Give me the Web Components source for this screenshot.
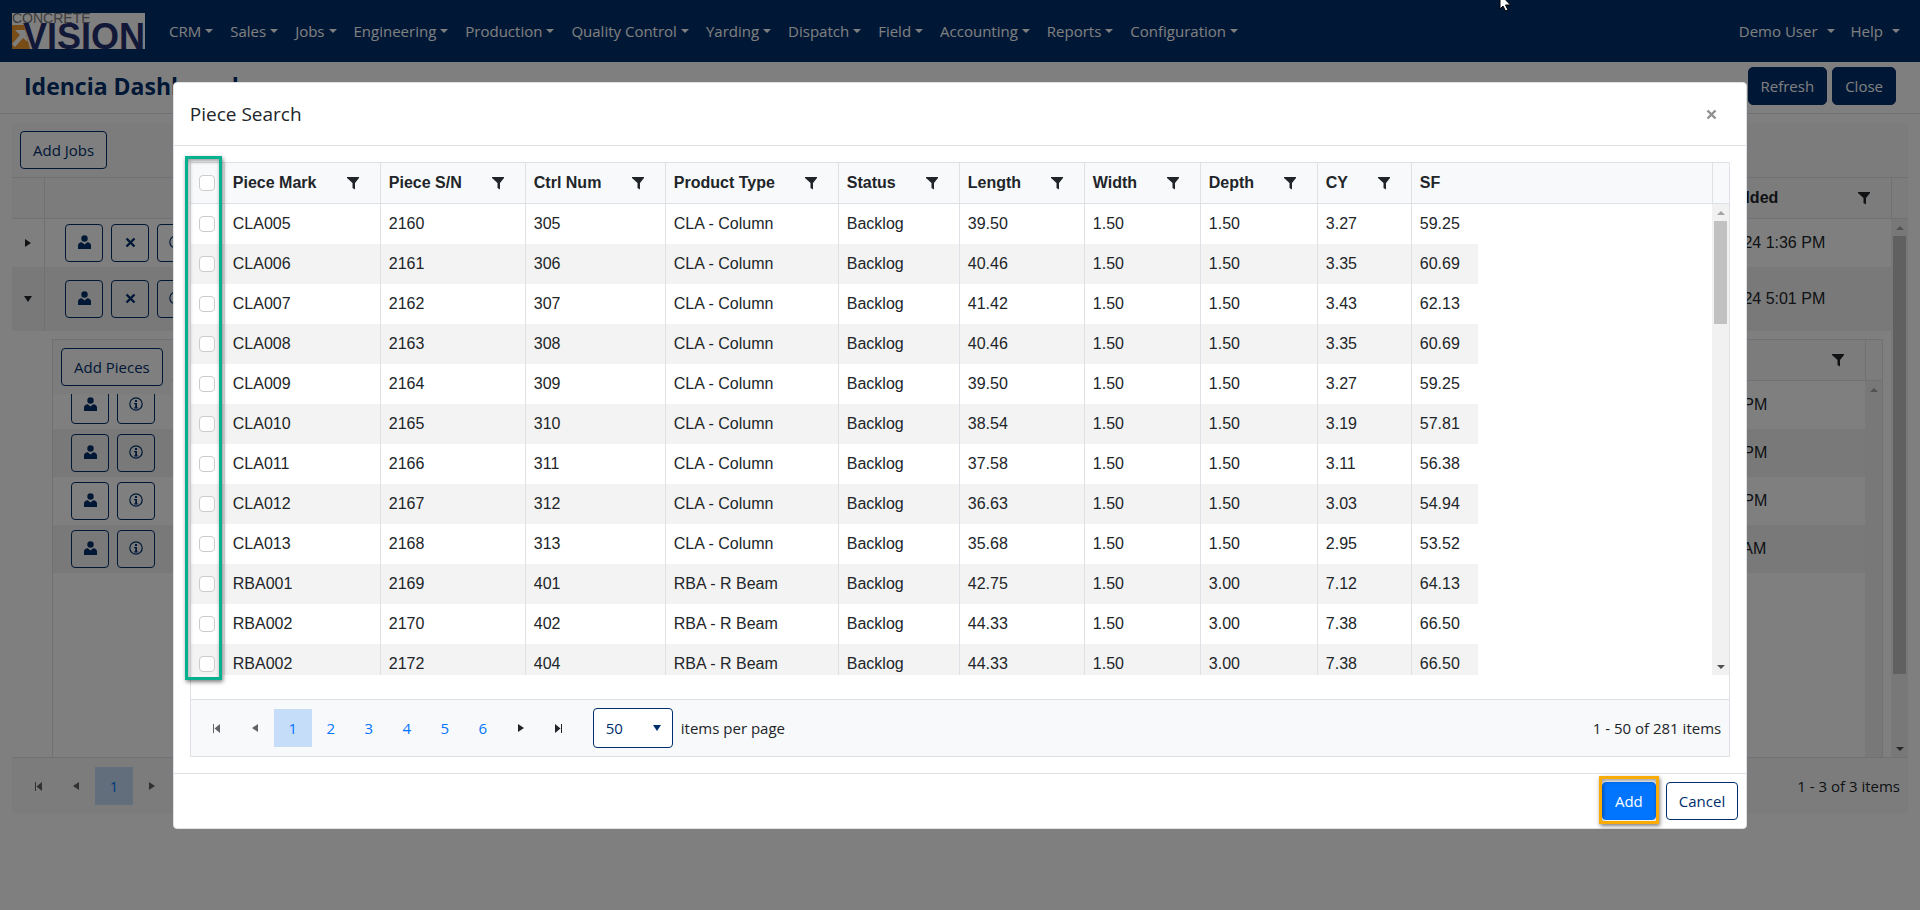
<!DOCTYPE html>
<html lang="en">
<head>
<meta charset="utf-8">
<title>Idencia Dashboard</title>
<style>
  :root {
    --navy: #002e6d;
    --line: #dee2e6;
    --panel: #f8f9fa;
    --text: #212529;
    --ui: "Open Sans", "Noto Sans", sans-serif;
    --data: "Liberation Sans", Arial, sans-serif;
  }
  body {
    margin: 0;
    min-height: 100vh;
    overflow: hidden;
    background: #fff;
    color: var(--text);
    font: 15px/24px var(--ui);
  }
</style>
</head>
<body>
<app-navbar>
  <nav-item>CRM</nav-item>
  <nav-item>Sales</nav-item>
  <nav-item>Jobs</nav-item>
  <nav-item>Engineering</nav-item>
  <nav-item>Production</nav-item>
  <nav-item>Quality Control</nav-item>
  <nav-item>Yarding</nav-item>
  <nav-item>Dispatch</nav-item>
  <nav-item>Field</nav-item>
  <nav-item>Accounting</nav-item>
  <nav-item>Reports</nav-item>
  <nav-item>Configuration</nav-item>
  <nav-item slot="user" wide>Demo User</nav-item>
  <nav-item slot="user" wide>Help</nav-item>
</app-navbar>
<page-bar heading="Idencia Dashboard">
  <ui-button variant="solid">Refresh</ui-button>
  <ui-button variant="solid">Close</ui-button>
</page-bar>
<jobs-grid></jobs-grid>
<modal-dialog heading="Piece Search">
  <piece-grid></piece-grid>
  <ui-button slot="footer" variant="primary" marked>Add</ui-button>
  <ui-button slot="footer">Cancel</ui-button>
</modal-dialog>
<mouse-pointer></mouse-pointer>

<script>
const ICONS = {
  filter: '<path d="M0 0h12v1L8 6v6.500L5.500 11V6L0 1z"/>',
  person: '<circle cx="6.500" cy="3.500" r="3.200"/><path d="M0 14v-3.500C0 8.500 1.500 7.500 3.800 7.200L6.500 9.500 9.200 7.200C11.500 7.500 13 8.500 13 10.500V14z"/>',
  close: '<path d="M1.500 1.500l8 8M9.500 1.500l-8 8" fill="none" stroke="currentColor" stroke-width="2.400"/>',
  info: '<circle cx="7" cy="7" r="6.200" fill="none" stroke="currentColor" stroke-width="1.200"/><path d="M6 3h2v2H6zM5 6h3v4.500h1.200v1H5v-1h1.200V7H5z"/>',
  right: '<path d="M0 0l6 4-6 4z"/>',
  left: '<path d="M6 0L0 4l6 4z"/>',
  down: '<path d="M0 0h8L4 6z"/>',
  first: '<path d="M0 0h1v9H0zM7 0v9L1.500 4.500z"/>',
  last: '<path d="M6 0h1v9H6zM0 0v9l5.500-4.500z"/>',
};
const SIZES = {
  filter: [12, 13], person: [13, 14], close: [11, 11], info: [14, 14],
  right: [6, 8], left: [6, 8], down: [8, 6], first: [7, 9], last: [7, 9],
};

function icon(name) {
  const [w, h] = SIZES[name];
  return `<svg width="${w}" height="${h}" viewBox="0 0 ${w} ${h}" fill="currentColor" aria-hidden="true">${ICONS[name]}</svg>`;
}

class BaseElement extends HTMLElement {
  constructor() {
    super();
    this.attachShadow({ mode: "open" });
  }

  connectedCallback() {
    this.shadowRoot.innerHTML = this.template();
  }
}

class NavItem extends BaseElement {
  template() {
    return `
      <style>
        :host { display: block; }
        a {
          display: flex;
          align-items: center;
          gap: 4px;
          padding: 8px;
          color: #fff;
          text-decoration: none;
          white-space: nowrap;
        }
        :host([wide]) a { gap: 9px; }
        i {
          border: 4px solid transparent;
          border-top-color: currentColor;
          border-bottom: 0;
        }
      </style>
      <a href="#"><slot></slot><i></i></a>
    `;
  }
}

class AppNavbar extends BaseElement {
  template() {
    return `
      <style>
        :host { display: block; background: var(--navy); }
        nav {
          display: flex;
          align-items: center;
          min-height: 62px;
          padding: 0 12px;
          box-sizing: border-box;
        }
        .logo { display: flex; margin-right: 16px; }
        .logo svg { overflow: visible; }
        .menu, .user { display: flex; }
        .menu { gap: 1px; }
        .user { margin-left: auto; }
      </style>
      <nav>
        <a class="logo" href="#" aria-label="Concrete Vision">
          <svg width="133" height="36" viewBox="0 0 133 36">
            <path d="M0 0h133v36H0z" fill="#fff"/>
            <path d="M0 12h12l6 24H0z" fill="#f0982c"/>
            <path d="M3 17h10l3 12-5-4-8 9-3-3 8-9z" fill="#fff"/>
            <text x="0" y="10" font-family="Liberation Sans, sans-serif" font-size="14" fill="#777">CONCRETE</text>
            <text x="11" y="36" font-family="Liberation Sans, sans-serif" font-size="36" font-weight="700" fill="#25306e">VISION</text>
          </svg>
        </a>
        <div class="menu"><slot></slot></div>
        <div class="user"><slot name="user"></slot></div>
      </nav>
    `;
  }
}

class UiButton extends BaseElement {
  template() {
    return `
      <style>
        :host {
          display: inline-block;
          position: relative;
          font: 15px/24px var(--ui);
        }
        button {
          display: block;
          height: 38px;
          padding: 0 12px;
          border: 1px solid var(--navy);
          border-radius: 4px;
          background: #fff;
          color: var(--navy);
          font: inherit;
          white-space: nowrap;
        }
        :host([variant="solid"]) button {
          border-radius: 5px;
          background: var(--navy);
          color: #fff;
        }
        :host([variant="primary"]) button {
          border-color: #0275ff;
          background: #0275ff;
          color: #fff;
        }
        :host([marked])::after {
          content: "";
          position: absolute;
          inset: -6px -3px -4px;
          border: 3px solid #fbab05;
          box-shadow: 1px 2px 4px rgba(0, 0, 0, .5), inset 1px 2px 4px rgba(0, 0, 0, .4);
          pointer-events: none;
        }
      </style>
      <button type="button"><slot></slot></button>
    `;
  }
}

class IconButton extends BaseElement {
  template() {
    return `
      <style>
        :host { display: block; }
        button {
          display: grid;
          place-items: center;
          width: 38px;
          height: 38px;
          padding: 0 0 2px;
          border: 1px solid var(--navy);
          border-radius: 4px;
          background: transparent;
          color: var(--navy);
        }
      </style>
      <button type="button" aria-label="${this.getAttribute("label")}">${icon(this.getAttribute("icon"))}</button>
    `;
  }
}

class PageBar extends BaseElement {
  template() {
    return `
      <style>
        :host {
          display: flex;
          align-items: center;
          justify-content: space-between;
          min-height: 47px;
          padding: 0 24px 4px;
          border-bottom: 1px solid var(--line);
        }
        h1 {
          margin: 0;
          color: var(--navy);
          font-size: 23px;
          font-weight: 700;
          line-height: 32px;
        }
        div { display: flex; gap: 5px; }
      </style>
      <h1>${this.getAttribute("heading")}</h1>
      <div><slot></slot></div>
    `;
  }
}

class ScrollRail extends BaseElement {
  template() {
    const thumb = this.getAttribute("thumb");
    return `
      <style>
        :host {
          display: flex;
          flex-direction: column;
          flex: none;
          width: 17px;
          background: #f1f1f1;
        }
        .arrow {
          display: grid;
          place-items: center;
          height: 17px;
        }
        .arrow::before {
          content: "";
          border: 4px solid transparent;
          border-top-width: 0;
          border-bottom-color: #a3a3a3;
        }
        .arrow.down { margin-top: auto; }
        .arrow.down::before {
          border-width: 4px 4px 0;
          border-top-color: #505050;
        }
        .thumb {
          height: ${thumb || 0}px;
          margin: 0 2px;
          background: #c1c1c1;
        }
      </style>
      <div class="arrow"></div>
      <div class="thumb"></div>
      <div class="arrow down"></div>
    `;
  }
}

class GridPager extends BaseElement {
  template() {
    const pages = Number(this.getAttribute("pages"));
    const single = pages === 1;
    const numbers = Array.from({ length: pages }, (_, i) =>
      `<button type="button" class="page${i === 0 ? " current" : ""}">${i + 1}</button>`
    ).join("");
    return `
      <style>
        :host {
          display: flex;
          align-items: center;
          min-height: 56px;
          padding: 0 8px 0 7px;
          border-top: 1px solid var(--line);
          background: var(--panel);
        }
        button {
          display: grid;
          place-items: center;
          width: 38px;
          height: 38px;
          padding: 0;
          border: 0;
          background: none;
          color: var(--text);
          font: inherit;
        }
        button:disabled { opacity: .7; }
        .page { color: #0275ff; }
        .current { background: #c6ddfa; }
        label { display: flex; align-items: center; gap: 8px; margin-left: 15px; }
        .picker { display: grid; align-items: center; }
        select, .picker svg { grid-area: 1 / 1; }
        select {
          appearance: none;
          width: 80px;
          height: 40px;
          padding: 0 12px;
          border: 1px solid var(--navy);
          border-radius: 4px;
          background: #fff;
          color: var(--navy);
          font: inherit;
        }
        .picker svg { justify-self: end; margin-right: 12px; color: var(--navy); }
        .summary { margin-left: auto; }
      </style>
      <button type="button" aria-label="First page" disabled>${icon("first")}</button>
      <button type="button" aria-label="Previous page" disabled>${icon("left")}</button>
      ${numbers}
      <button type="button" aria-label="Next page"${single ? " disabled" : ""}>${icon("right")}</button>
      <button type="button" aria-label="Last page"${single ? " disabled" : ""}>${icon("last")}</button>
      ${this.hasAttribute("size") ? `
        <label>
          <span class="picker">
            <select><option>${this.getAttribute("size")}</option></select>
            ${icon("down")}
          </span>
          items per page
        </label>` : ""}
      <span class="summary">${this.getAttribute("summary")}</span>
    `;
  }
}

// Rules shared by every table that has a fixed header above a scrolling body
const tableStyles = `
  table {
    width: 100%;
    border-collapse: separate;
    border-spacing: 0;
    table-layout: fixed;
    font: 16px/24px var(--data);
  }
  th, td {
    box-sizing: border-box;
    height: 40px;
    padding: 0 8px;
    border-left: 1px solid var(--line);
    text-align: left;
    white-space: nowrap;
  }
  .head {
    display: flex;
    border-bottom: 1px solid var(--line);
    background: var(--panel);
  }
  .head table { flex: 1; min-width: 0; }
  .head::after {
    content: "";
    box-sizing: border-box;
    width: 17px;
    border-left: 1px solid var(--line);
  }
  .body { display: flex; overflow: hidden; }
  .rows { flex: 1; min-width: 0; overflow: hidden; }
  th:first-child, td:first-child { border-left: 0; }
  th div { display: flex; align-items: center; }
  .filter {
    display: grid;
    place-items: center;
    width: 12px;
    height: 16px;
    margin: 0 13px 0 auto;
    padding: 0;
    border: 0;
    background: none;
    color: var(--text);
  }
`;

function headCell(title, filter = true) {
  const button = filter
    ? `<button type="button" class="filter" aria-label="Filter ${title}">${icon("filter")}</button>`
    : "";
  return `<th scope="col"><div>${title}${button}</div></th>`;
}

class AssignedPieces extends BaseElement {
  template() {
    const dates = ["6/25/2024 1:40 PM", "6/25/2024 1:40 PM", "6/25/2024 1:41 PM", "6/26/2024 9:15 AM"];
    const cols = `<colgroup><col><col width="241"></colgroup>`;
    const rows = dates.map((date) => `
      <tr>
        <td><div class="actions">
          <icon-button icon="person" label="Assign"></icon-button>
          <icon-button icon="info" label="Details"></icon-button>
        </div></td>
        <td>${date}</td>
      </tr>`).join("");
    return `
      <style>
        ${tableStyles}
        :host {
          display: block;
          position: relative;
          border: 1px solid var(--line);
          background: #fff;
        }
        td { height: 48px; border-left: 0; }
        th { border-left: 0; }
        tr:nth-child(even) td { background: #f2f2f2; }
        .actions { display: flex; gap: 8px; padding-left: 10px; }
        .body { min-height: 440px; }
        .toolbar {
          position: absolute;
          top: 0;
          left: 0;
          padding: 8px;
          background: var(--panel);
        }
        .toolbar ui-button { display: block; }
      </style>
      <div class="head"><table>${cols}<tr><th></th>${headCell("")}</tr></table></div>
      <div class="body">
        <div class="rows"><table>${cols}${rows}</table></div>
        <scroll-rail></scroll-rail>
      </div>
      <div class="toolbar"><ui-button>Add Pieces</ui-button></div>
    `;
  }
}

class JobsGrid extends BaseElement {
  template() {
    const cols = `<colgroup><col width="32"><col><col width="209"></colgroup>`;
    const actions = `
      <div class="actions">
        <icon-button icon="person" label="Assign"></icon-button>
        <icon-button icon="close" label="Remove"></icon-button>
        <icon-button icon="info" label="Details"></icon-button>
      </div>`;
    return `
      <style>
        ${tableStyles}
        :host { display: block; margin: 9px 12px 0; }
        .toolbar { padding: 8px; background: var(--panel); }
        .toolbar ui-button { display: block; width: max-content; }
        .head { border-top: 1px solid var(--line); }
        .body { height: 538px; }
        th:last-child, .job td:last-child { border-left: 0; }
        .job td { height: 48px; }
        .job.open td { height: 64px; background: #f2f2f2; }
        .detail td { border: 0; padding: 8px; }
        .actions { display: flex; gap: 8px; padding-left: 12px; }
        .toggle {
          display: grid;
          place-items: center;
          width: 16px;
          height: 16px;
          padding: 0;
          border: 0;
          background: none;
          color: var(--text);
        }
      </style>
      <div class="toolbar"><ui-button>Add Jobs</ui-button></div>
      <div class="head"><table>${cols}<tr><th></th><th></th>${headCell("Date Added")}</tr></table></div>
      <div class="body">
        <div class="rows">
          <table>
            ${cols}
            <tr class="job">
              <td><button type="button" class="toggle" aria-label="Expand">${icon("right")}</button></td>
              <td>${actions}</td>
              <td>6/24/2024 1:36 PM</td>
            </tr>
            <tr class="job open">
              <td><button type="button" class="toggle" aria-label="Collapse">${icon("down")}</button></td>
              <td>${actions}</td>
              <td>6/24/2024 5:01 PM</td>
            </tr>
            <tr class="detail">
              <td></td>
              <td colspan="2"><assigned-pieces></assigned-pieces></td>
            </tr>
          </table>
        </div>
        <scroll-rail thumb="438"></scroll-rail>
      </div>
      <grid-pager pages="1" summary="1 - 3 of 3 items"></grid-pager>
    `;
  }
}

const PIECES = [
  ["CLA005", 2160, 305, "CLA - Column", "39.50", "1.50", "3.27", "59.25"],
  ["CLA006", 2161, 306, "CLA - Column", "40.46", "1.50", "3.35", "60.69"],
  ["CLA007", 2162, 307, "CLA - Column", "41.42", "1.50", "3.43", "62.13"],
  ["CLA008", 2163, 308, "CLA - Column", "40.46", "1.50", "3.35", "60.69"],
  ["CLA009", 2164, 309, "CLA - Column", "39.50", "1.50", "3.27", "59.25"],
  ["CLA010", 2165, 310, "CLA - Column", "38.54", "1.50", "3.19", "57.81"],
  ["CLA011", 2166, 311, "CLA - Column", "37.58", "1.50", "3.11", "56.38"],
  ["CLA012", 2167, 312, "CLA - Column", "36.63", "1.50", "3.03", "54.94"],
  ["CLA013", 2168, 313, "CLA - Column", "35.68", "1.50", "2.95", "53.52"],
  ["RBA001", 2169, 401, "RBA - R Beam", "42.75", "3.00", "7.12", "64.13"],
  ["RBA002", 2170, 402, "RBA - R Beam", "44.33", "3.00", "7.38", "66.50"],
  ["RBA002", 2172, 404, "RBA - R Beam", "44.33", "3.00", "7.38", "66.50"],
];

class PieceGrid extends BaseElement {
  template() {
    const widths = [33, 156, 145, 140, 173, 121, 125, 116, 117, 94];
    const cols = widths.map((w) => `<col width="${w}">`).join("");
    const titles = ["Piece Mark", "Piece S/N", "Ctrl Num", "Product Type", "Status", "Length", "Width", "Depth", "CY"];
    const rows = PIECES.map(([mark, serial, ctrl, type, length, depth, cy, sf]) => {
      const cells = [mark, serial, ctrl, type, "Backlog", length, "1.50", depth, cy, sf];
      return `
        <tr>
          <td><input type="checkbox" aria-label="Select ${mark} ${serial}"></td>
          ${cells.map((cell) => `<td>${cell}</td>`).join("")}
        </tr>`;
    }).join("");
    return `
      <style>
        ${tableStyles}
        :host {
          display: block;
          position: relative;
          border: 1px solid var(--line);
        }
        .body { height: 471px; margin-bottom: 24px; }
        .rows table { width: 1287px; }
        tr:nth-child(even) td { background: #f3f3f3; }
        input {
          appearance: none;
          display: block;
          width: 16px;
          height: 16px;
          margin: 0;
          border: 1px solid #ccc;
          border-radius: 4px;
          background: #fff;
        }
        /* callout round the selection column */
        .callout {
          position: absolute;
          top: -7px;
          left: -6px;
          box-sizing: border-box;
          width: 37px;
          height: 524px;
          border: 3px solid #07b08f;
          box-shadow: 1px 2px 4px rgba(0, 0, 0, .5), inset 1px 2px 4px rgba(0, 0, 0, .4);
          pointer-events: none;
        }
      </style>
      <div class="head">
        <table>
          <colgroup>${cols}<col></colgroup>
          <tr>
            <th><input type="checkbox" aria-label="Select all"></th>
            ${titles.map((title) => headCell(title)).join("")}
            ${headCell("SF", false)}
          </tr>
        </table>
      </div>
      <div class="body">
        <div class="rows"><table><colgroup>${cols}<col></colgroup>${rows}</table></div>
        <scroll-rail thumb="103"></scroll-rail>
      </div>
      <grid-pager pages="6" size="50" summary="1 - 50 of 281 items"></grid-pager>
      <div class="callout"></div>
    `;
  }
}

class ModalDialog extends BaseElement {
  template() {
    return `
      <style>
        :host {
          position: fixed;
          inset: 0;
          display: flex;
          align-items: flex-start;
          justify-content: center;
          background: rgba(0, 0, 0, .5);
        }
        section {
          box-sizing: border-box;
          width: 82%;
          margin-top: 82px;
          border: 1px solid var(--line);
          border-radius: 4px;
          background: #fff;
        }
        header, footer { display: flex; align-items: center; }
        header {
          justify-content: space-between;
          min-height: 62px;
          padding: 0 29px 0 16px;
          border-bottom: 1px solid var(--line);
        }
        h2 {
          margin: 0;
          font-size: 19px;
          font-weight: 400;
          line-height: 32px;
        }
        header button {
          display: flex;
          padding: 0;
          border: 0;
          background: none;
          color: #8f8f8f;
        }
        .content { padding: 16px; }
        footer {
          justify-content: flex-end;
          gap: 10px;
          padding: 8px;
          border-top: 1px solid var(--line);
        }
      </style>
      <section role="dialog" aria-label="${this.getAttribute("heading")}">
        <header>
          <h2>${this.getAttribute("heading")}</h2>
          <button type="button" aria-label="Close">${icon("close")}</button>
        </header>
        <div class="content"><slot></slot></div>
        <footer><slot name="footer"></slot></footer>
      </section>
    `;
  }
}

class MousePointer extends BaseElement {
  template() {
    return `
      <style>
        :host { position: fixed; top: 0; left: 1499px; display: flex; }
      </style>
      <svg width="13" height="12" viewBox="0 0 13 12" aria-hidden="true">
        <path d="M1-6V9l3-3 2.500 5 2.500-1-2.500-5h5z" fill="#fff" stroke="#000"/>
      </svg>
    `;
  }
}

customElements.define("nav-item", NavItem);
customElements.define("app-navbar", AppNavbar);
customElements.define("ui-button", UiButton);
customElements.define("icon-button", IconButton);
customElements.define("page-bar", PageBar);
customElements.define("scroll-rail", ScrollRail);
customElements.define("grid-pager", GridPager);
customElements.define("assigned-pieces", AssignedPieces);
customElements.define("jobs-grid", JobsGrid);
customElements.define("piece-grid", PieceGrid);
customElements.define("modal-dialog", ModalDialog);
customElements.define("mouse-pointer", MousePointer);
</script>
</body>
</html>
